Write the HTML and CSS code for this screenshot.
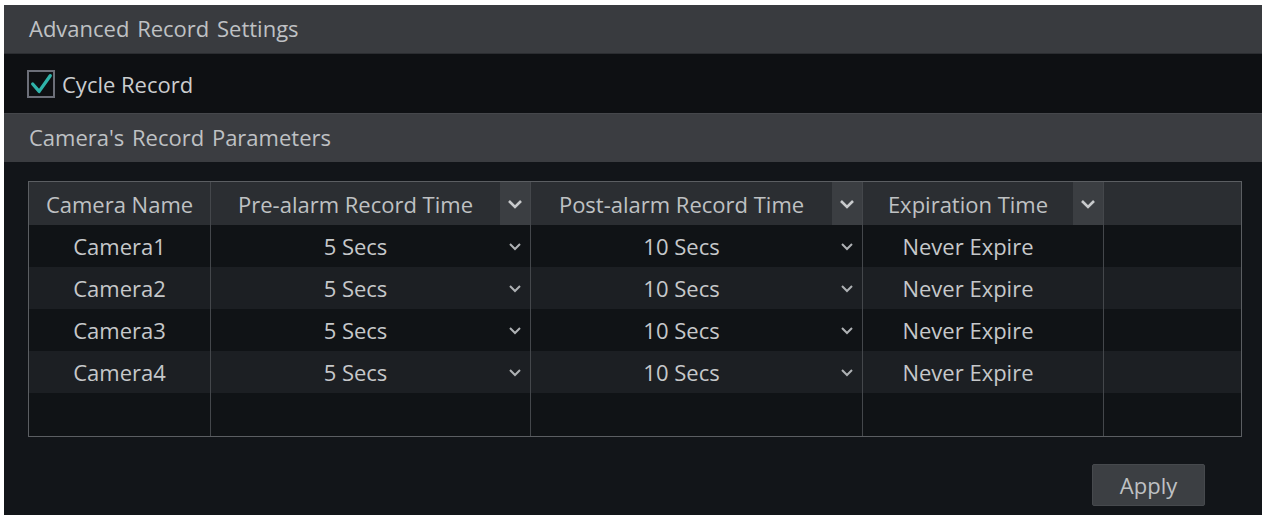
FILE: index.html
```html
<!DOCTYPE html>
<html>
<head>
<meta charset="utf-8">
<link rel="stylesheet" href="styles.css">
</head>
<body>
<div class="page">
  <div class="section-title">Advanced Record Settings</div>
  <div class="option-row">
    <span class="checkbox">
      <svg viewBox="0 0 26 26" width="26" height="26"><polyline points="4,13 11,21 23,4" fill="none" stroke="#2fb3aa" stroke-width="3.6" stroke-linecap="round" stroke-linejoin="round"/></svg>
    </span>
    <span class="option-label">Cycle Record</span>
  </div>
  <div class="section-title second">Camera's Record Parameters</div>
  <div class="content">
    <div class="grid">
      <div class="cell head"><span class="label">Camera Name</span></div>
      <div class="cell head"><span class="label">Pre-alarm Record Time</span><span class="drop-btn"><svg viewBox="0 0 16 10" width="16" height="10"><polyline points="2,2 8,8 14,2" fill="none" stroke="#c8cacc" stroke-width="2.6"/></svg></span></div>
      <div class="cell head"><span class="label">Post-alarm Record Time</span><span class="drop-btn"><svg viewBox="0 0 16 10" width="16" height="10"><polyline points="2,2 8,8 14,2" fill="none" stroke="#c8cacc" stroke-width="2.6"/></svg></span></div>
      <div class="cell head"><span class="label">Expiration Time</span><span class="drop-btn"><svg viewBox="0 0 16 10" width="16" height="10"><polyline points="2,2 8,8 14,2" fill="none" stroke="#c8cacc" stroke-width="2.6"/></svg></span></div>
      <div class="cell head last"></div>

      <div class="cell dark"><span class="label">Camera1</span></div>
      <div class="cell dark"><span class="label">5 Secs</span><span class="chev"><svg viewBox="0 0 14 9" width="14" height="9"><polyline points="2,2 7,7 12,2" fill="none" stroke="#aeb1b4" stroke-width="2"/></svg></span></div>
      <div class="cell dark"><span class="label">10 Secs</span><span class="chev"><svg viewBox="0 0 14 9" width="14" height="9"><polyline points="2,2 7,7 12,2" fill="none" stroke="#aeb1b4" stroke-width="2"/></svg></span></div>
      <div class="cell dark"><span class="label">Never Expire</span><span class="chev"></span></div>
      <div class="cell dark last"></div>

      <div class="cell light"><span class="label">Camera2</span></div>
      <div class="cell light"><span class="label">5 Secs</span><span class="chev"><svg viewBox="0 0 14 9" width="14" height="9"><polyline points="2,2 7,7 12,2" fill="none" stroke="#aeb1b4" stroke-width="2"/></svg></span></div>
      <div class="cell light"><span class="label">10 Secs</span><span class="chev"><svg viewBox="0 0 14 9" width="14" height="9"><polyline points="2,2 7,7 12,2" fill="none" stroke="#aeb1b4" stroke-width="2"/></svg></span></div>
      <div class="cell light"><span class="label">Never Expire</span><span class="chev"></span></div>
      <div class="cell light last"></div>

      <div class="cell dark"><span class="label">Camera3</span></div>
      <div class="cell dark"><span class="label">5 Secs</span><span class="chev"><svg viewBox="0 0 14 9" width="14" height="9"><polyline points="2,2 7,7 12,2" fill="none" stroke="#aeb1b4" stroke-width="2"/></svg></span></div>
      <div class="cell dark"><span class="label">10 Secs</span><span class="chev"><svg viewBox="0 0 14 9" width="14" height="9"><polyline points="2,2 7,7 12,2" fill="none" stroke="#aeb1b4" stroke-width="2"/></svg></span></div>
      <div class="cell dark"><span class="label">Never Expire</span><span class="chev"></span></div>
      <div class="cell dark last"></div>

      <div class="cell light"><span class="label">Camera4</span></div>
      <div class="cell light"><span class="label">5 Secs</span><span class="chev"><svg viewBox="0 0 14 9" width="14" height="9"><polyline points="2,2 7,7 12,2" fill="none" stroke="#aeb1b4" stroke-width="2"/></svg></span></div>
      <div class="cell light"><span class="label">10 Secs</span><span class="chev"><svg viewBox="0 0 14 9" width="14" height="9"><polyline points="2,2 7,7 12,2" fill="none" stroke="#aeb1b4" stroke-width="2"/></svg></span></div>
      <div class="cell light"><span class="label">Never Expire</span><span class="chev"></span></div>
      <div class="cell light last"></div>

      <div class="cell dark"></div>
      <div class="cell dark"></div>
      <div class="cell dark"></div>
      <div class="cell dark"></div>
      <div class="cell dark last"></div>
    </div>
    <div class="actions">
      <button class="apply">Apply</button>
    </div>
  </div>
</div>
</body>
</html>
```

FILE: styles.css
```css
html, body {
  margin: 0;
  padding: 0;
  background: #ffffff;
  height: 515px;
  overflow: hidden;
}
.page {
  margin: 5px 0 0 4px;
  height: 510px;
  display: flex;
  flex-direction: column;
  font-family: "Open Sans", "Noto Sans", sans-serif;
  font-size: 22px;
  color: #c6c8ca;
  background: #121519;
}
.section-title {
  height: 48px;
  line-height: 46px;
  padding-left: 25px;
  background: #393b3f;
  color: #bfc1c4;
  word-spacing: 2px;
  border-bottom: 1px solid #2b2d31;
}
.section-title.second {
  height: 48px;
  background: #3b3d41;
  border-top: 1px solid #45474b;
  border-bottom: none;
}
.option-row {
  height: 59px;
  display: flex;
  align-items: center;
  padding-left: 23px;
  background: #0e1013;
}
.checkbox {
  width: 24px;
  height: 24px;
  border: 2px solid #6c6f79;
  display: flex;
  align-items: center;
  justify-content: center;
  margin-right: 7px;
}
.checkbox svg {
  display: block;
}
.option-label {
  color: #cbcdcf;
}
.content {
  flex: 1;
  padding: 19px 20px 0 24px;
  display: flex;
  flex-direction: column;
}
.grid {
  width: 1212px;
  display: grid;
  grid-template-columns: 182px 320px 332px 241px 137px;
  grid-template-rows: 43px 42px 42px 42px 42px 43px;
  border: 1px solid #5b5e62;
}
.cell {
  display: flex;
  align-items: stretch;
  border-right: 1px solid #44474b;
  min-width: 0;
}
.cell.last {
  border-right: none;
}
.cell.head {
  background: #2b2e32;
  color: #bfc1c3;
}
.cell.dark {
  background: #101316;
}
.cell.light {
  background: #1c1f23;
}
.label {
  flex: 1;
  display: flex;
  align-items: center;
  justify-content: center;
  white-space: nowrap;
}
.drop-btn {
  width: 30px;
  flex: none;
  background: #3b3e42;
  display: flex;
  align-items: center;
  justify-content: center;
}
.chev {
  width: 30px;
  flex: none;
  display: flex;
  align-items: center;
  justify-content: center;
}
.drop-btn svg, .chev svg {
  display: block;
}
.actions {
  display: flex;
  justify-content: flex-end;
  padding-top: 27px;
  padding-right: 37px;
}
.apply {
  box-sizing: border-box;
  width: 113px;
  height: 42px;
  background: #3c3f43;
  border: 1px solid #46494d;
  border-radius: 2px;
  color: #bfc1c3;
  font-family: "Open Sans", "Noto Sans", sans-serif;
  font-size: 22px;
  padding: 0;
}
```
